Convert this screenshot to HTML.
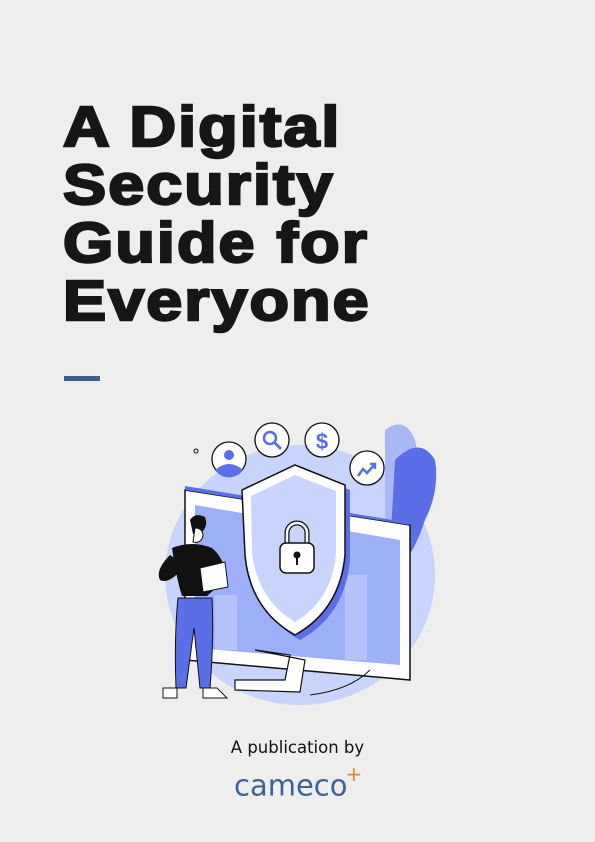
<!DOCTYPE html>
<html><head><meta charset="utf-8"><style>
html,body{margin:0;padding:0}
body{width:595px;height:842px;background:#eeeeee;position:relative;overflow:hidden;font-family:"Liberation Sans",sans-serif}
h1{position:absolute;left:63px;top:98px;margin:0;font-size:57px;line-height:58px;font-weight:bold;color:#161616;-webkit-text-stroke:2.4px #161616;letter-spacing:1.8px;transform:scaleX(1.135);transform-origin:left top}
.bar{position:absolute;left:64px;top:376px;width:36px;height:5px;background:#3f5e8c}
.pub{position:absolute;left:0;width:595px;top:738px;text-align:center;font-family:"DejaVu Sans",sans-serif;font-size:16.5px;color:#111}
.logo{position:absolute;left:234px;top:766px;font-family:"DejaVu Sans",sans-serif;font-size:29px;color:#3f6291}
.logo sup{color:#e08a3c;font-size:20px;position:relative;top:-4px;margin-left:-2px}
svg{position:absolute;left:0;top:0}
</style></head><body>
<h1>A Digital<br>Security<br>Guide for<br>Everyone</h1>
<div class="bar"></div>
<svg width="595" height="842" viewBox="0 0 595 842">
<ellipse cx="300" cy="575" rx="135" ry="130" fill="#c8d4fb"/>
<path d="M385 430 q20 -15 30 10 q8 30 -10 60 q-10 20 -20 30 z" fill="#a9b8f4"/>
<path d="M395 460 q25 -25 40 0 q5 30 -10 60 q-10 30 -20 40 l-15 -10 z" fill="#5a6ee8"/>
<path d="M185 490 L410 525 L410 680 L185 660 Z" fill="#fff" stroke="#111" stroke-width="1.5"/>
<path d="M185 490 L410 525 L405 522 L185 486Z" fill="#5a6ee8"/>
<path d="M195 505 L400 540 L400 665 L195 648Z" fill="#9db0f7"/>
<rect x="215" y="595" width="22" height="55" fill="#b5c3fa"/>
<rect x="345" y="575" width="22" height="85" fill="#b5c3fa"/>
<path d="M255 650 L290 655 L285 680 L235 680 L235 690 L300 692 L305 660Z" fill="#fff" stroke="#111" stroke-width="1.2"/>
<path d="M300 470 L350 490 L350 560 Q345 615 300 640 Q255 615 250 560 L245 495 Z" fill="#5a6ee8"/>
<path d="M295 465 L345 485 L345 555 Q340 610 295 635 Q250 610 245 555 L242 490 Z" fill="#fff" stroke="#111" stroke-width="1.5"/>
<path d="M295 475 L336 491 L336 553 Q332 600 295 622 Q258 600 252 553 L251 496 Z" fill="#c8d4fb"/>
<path d="M287 545 v-12 a10 10 0 0 1 20 0 v12" fill="none" stroke="#111" stroke-width="5"/>
<path d="M287 545 v-12 a10 10 0 0 1 20 0 v12" fill="none" stroke="#fff" stroke-width="2.5"/>
<rect x="280" y="543" width="34" height="30" rx="6" fill="#fff" stroke="#111" stroke-width="1.5"/>
<circle cx="297" cy="555" r="3.5" fill="#111"/><rect x="296" y="556" width="2" height="9" fill="#111"/>
<g stroke="#111" stroke-width="1.3" fill="#fff">
<circle cx="229" cy="459" r="17"/><circle cx="272" cy="440" r="17"/><circle cx="322" cy="440" r="17"/><circle cx="367" cy="468" r="17"/>
</g>
<path d="M215 470 q14 -12 28 0 a17 17 0 0 1 -28 0z" fill="#5a6ee8"/>
<circle cx="229" cy="455" r="5" fill="#5a6ee8"/>
<circle cx="270" cy="438" r="6" fill="none" stroke="#5a6ee8" stroke-width="2.5"/><path d="M274 442 l7 7" stroke="#5a6ee8" stroke-width="3"/>
<text x="322" y="449" font-size="22" font-weight="bold" text-anchor="middle" fill="#5a6ee8" font-family="Liberation Sans">$</text>
<path d="M358 476 l5 -7 l4 4 l8 -9 m-5 0 h5 v5" fill="none" stroke="#5a6ee8" stroke-width="2.5"/>
<circle cx="196" cy="451" r="2" fill="none" stroke="#111"/>
<path d="M190 520 q5 -8 15 -3 q3 8 -2 14 l-10 3 z" fill="#111"/>
<path d="M195 528 q8 0 8 8 q-2 8 -10 6 z" fill="#fff" stroke="#111"/>
<path d="M172 548 q20 -8 40 0 q12 10 15 30 l-20 18 h-25 q-5 -15 -10 -48z" fill="#111"/>
<path d="M170 555 q-15 15 -10 25 q10 5 25 -15" fill="#111"/>
<path d="M200 568 l25 -6 l3 25 l-25 5z" fill="#fff" stroke="#111"/>
<path d="M178 598 h34 q2 40 -2 90 h-10 l-6 -60 l-8 60 h-10 q-2 -50 2 -90z" fill="#5a6ee8" stroke="#111"/>
<path d="M163 688 h14 v10 h-14z M203 688 h14 l10 10 h-24z" fill="#fff" stroke="#111"/>
<path d="M310 695 q40 -5 60 -25" fill="none" stroke="#111"/>
</svg>
<div class="pub">A publication by</div>
<div class="logo">cameco<sup>+</sup></div>
</body></html>
